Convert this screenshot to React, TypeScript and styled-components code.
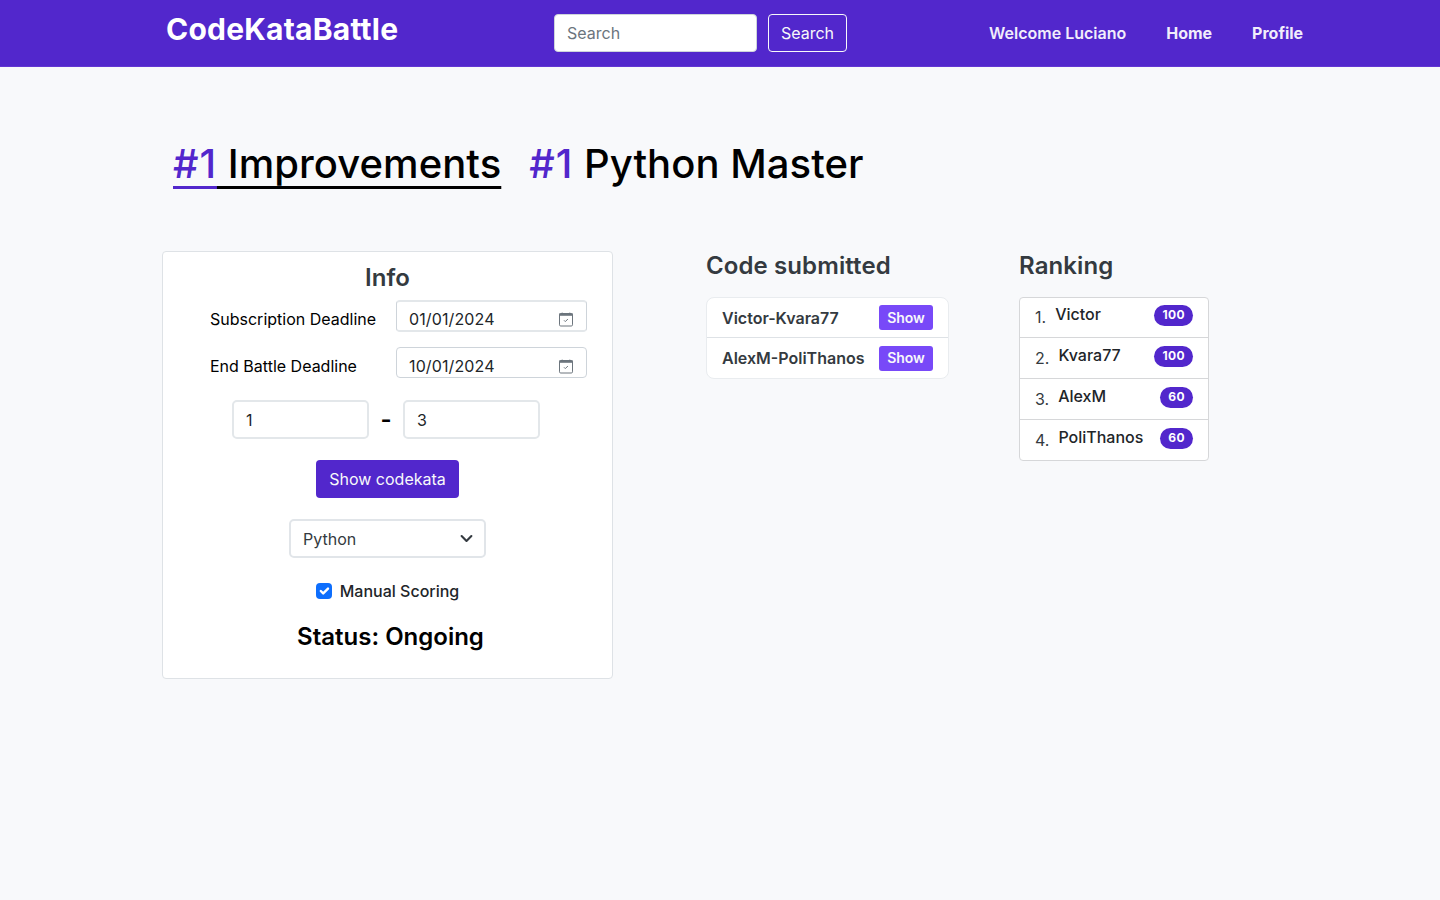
import React from "react";
import styled, { createGlobalStyle } from "styled-components";

const GlobalStyle = createGlobalStyle`
  *, *::before, *::after { box-sizing: border-box; }
  body {
    margin: 0;
    background: #f8f9fb;
    color: #212529;
    font-family: Inter, "Liberation Sans", sans-serif;
    font-size: 16px;
    line-height: 24px;
  }
  input, button { font: inherit; letter-spacing: inherit; }
  h1, h2, h3, p, ol, ul { margin: 0; padding: 0; list-style: none; }
`;

const Page = styled.div`
  min-height: 900px;
  white-space: nowrap;
`;

const Navbar = styled.header`
  display: flex;
  align-items: flex-start;
  height: 67px;
  padding: 14px 0 0 166px;
  background: #5227cc;
  border-bottom: 1px solid #6236d3;
`;

const Brand = styled.h1`
  width: 388px;
  font-size: 30px;
  line-height: 30px;
  font-weight: 700;
  letter-spacing: 0.22px;
  color: #fff;
`;

const SearchForm = styled.form`
  display: flex;
  gap: 11px;
  width: 435px;
`;

const SearchInput = styled.input`
  width: 203px;
  height: 38px;
  padding: 0 12px;
  border: 1px solid #ced4da;
  border-radius: 4px;
  background: #fff;
  &::placeholder { color: #6c757d; opacity: 1; }
`;

const SearchButton = styled.button`
  width: 79px;
  height: 38px;
  padding: 0;
  border: 1px solid #f8f9fa;
  border-radius: 4px;
  background: transparent;
  color: #f8f9fa;
`;

const Nav = styled.nav`
  display: flex;
  gap: 40px;
  padding-top: 7px;
`;

const NavItem = styled.a<{ $strong?: boolean }>`
  color: #f1edfb;
  font-weight: ${(p) => (p.$strong ? 700 : 600)};
`;

const Tabs = styled.div`
  display: flex;
  gap: 28px;
  padding: 73px 0 0 173px;
  height: 184px;
`;

const Tab = styled.h2<{ $active?: boolean }>`
  height: 49px;
  font-size: 40px;
  line-height: 48px;
  font-weight: 500;
  letter-spacing: 0.06px;
  color: #000;
  text-decoration: ${(p) => (p.$active ? "underline" : "none")};
  text-decoration-thickness: 2.6px;
  text-underline-offset: 8px;
  text-decoration-skip-ink: none;
`;

const TabRank = styled.span`
  color: #5227cc;
  letter-spacing: 0.9px;
  text-decoration: inherit;
`;

const Columns = styled.main`
  display: flex;
  align-items: flex-start;
  padding-left: 162px;
`;

const InfoCard = styled.section`
  display: flex;
  flex-direction: column;
  align-items: center;
  width: 451px;
  height: 428px;
  margin-right: 93px;
  padding-top: 11px;
  background: #fff;
  border: 1px solid #dee2e6;
  border-radius: 4px;
`;

const SectionTitle = styled.h3`
  font-size: 24px;
  line-height: 30px;
  font-weight: 600;
  letter-spacing: 0.1px;
  color: #343a40;
`;

const DateRow = styled.div`
  display: flex;
  width: 377px;
  height: 32px;
  margin: 7px 0 0 22px;
  & + & { margin-top: 15px; }
`;

const DateLabel = styled.label`
  width: 186px;
  padding-top: 7px;
  color: #000;
`;

const DateField = styled.div<{ $soft: boolean }>`
  display: flex;
  justify-content: space-between;
  width: 191px;
  height: ${(p) => (p.$soft ? 32 : 31)}px;
  padding: ${(p) => (p.$soft ? 5 : 6)}px 12px 0;
  border: 1px solid #ced4da;
  border-width: ${(p) => (p.$soft ? "2px 1px" : "1px")};
  border-top-color: ${(p) => (p.$soft ? "#e3e7ea" : "#ced4da")};
  border-bottom-color: ${(p) => (p.$soft ? "#e3e7ea" : "#ced4da")};
  border-radius: 4px;
  background: #fff;
  letter-spacing: 0.12px;
  svg { margin-top: 5px; }
`;

const GroupRange = styled.div`
  display: flex;
  align-items: center;
  margin: 21px 3px 0 0;
`;

const NumberField = styled.div`
  width: 137px;
  height: 39px;
  padding: 6px 12px;
  border: 2px solid #e3e7ea;
  border-radius: 5px;
  background: #fff;
`;

const Dash = styled.span`
  width: 34px;
  text-align: center;
  font-size: 24px;
  font-weight: 600;
  color: #000;
`;

const KataButton = styled.button`
  width: 143px;
  height: 38px;
  margin-top: 21px;
  padding: 0;
  border: 0;
  border-radius: 4px;
  background: #5227cc;
  color: #f8f9fa;
`;

const LanguageSelect = styled.div`
  display: flex;
  align-items: center;
  justify-content: space-between;
  width: 197px;
  height: 39px;
  margin-top: 21px;
  padding: 0 11px 0 12px;
  border: 2px solid #e1e5e9;
  border-radius: 5px;
  color: #343a40;
`;

const ScoringRow = styled.label`
  display: flex;
  align-items: center;
  gap: 8px;
  margin-top: 21px;
  font-weight: 500;
`;

const CheckMark = styled.span`
  display: flex;
  width: 16px;
  height: 16px;
  border-radius: 4px;
  background: #0d6efd;
`;

const Status = styled.p`
  margin: 20px 0 0 6px;
  font-size: 24px;
  line-height: 28px;
  font-weight: 600;
  color: #000;
`;

const ListSection = styled.section<{ $width: number }>`
  width: ${(p) => p.$width}px;
`;

const List = styled.ol<{ $radius: number; $border: string }>`
  margin-top: 16px;
  border: 1px solid ${(p) => p.$border};
  border-radius: ${(p) => p.$radius}px;
  background: #fff;
  overflow: hidden;
`;

const SubmissionRow = styled.li`
  display: flex;
  align-items: center;
  justify-content: space-between;
  height: 41px;
  padding: 0 15px;
  font-weight: 600;
  color: #343a40;
  & + & { border-top: 1px solid #dee2e6; }
  &:first-child { height: 39px; }
`;

const ShowButton = styled.button`
  width: 54px;
  height: 25px;
  padding: 0;
  border: 0;
  border-radius: 3px;
  background: #7849f8;
  color: #f8f9fa;
  font-size: 14px;
  font-weight: 600;
`;

const RankRow = styled.li`
  display: flex;
  height: 41px;
  padding: 8px 15px 0;
  & + & { border-top: 1px solid #d6d7d9; }
  &:first-child { height: 39px; padding-top: 7px; }
`;

const Position = styled.span`
  margin-right: 9px;
  color: #343a40;
`;

const Player = styled.span`
  flex: 1;
  margin-top: -3px;
  font-weight: 500;
`;

const Score = styled.span`
  height: 21px;
  padding: 0 8px;
  border-radius: 11px;
  background: #5227cc;
  color: #fff;
  font-size: 12px;
  line-height: 20px;
  font-weight: 700;
  letter-spacing: 0.4px;
`;

const CalendarIcon = () => (
  <svg width="16" height="16" viewBox="0 0 16 16" fill="none" stroke="#6c757d">
    <rect x="1.5" y="1.5" width="13" height="12.5" rx="1.2" />
    <path d="M1.2 2.6h13.6" strokeWidth="2.4" />
    <path d="M4.2.6v1M11.8.6v1" />
    <path d="m6 8.3 1.3 1.3 2.6-2.6" />
  </svg>
);

const ChevronIcon = () => (
  <svg width="13" height="13" viewBox="0 0 16 16" fill="none" stroke="#343a40" strokeWidth="2.6" strokeLinecap="round" strokeLinejoin="round">
    <path d="m2 5 6 6 6-6" />
  </svg>
);

const CheckIcon = () => (
  <svg width="16" height="16" viewBox="0 0 20 20" fill="none" stroke="#fff" strokeWidth="3" strokeLinecap="round" strokeLinejoin="round">
    <path d="m6 10 3 3 6-6" />
  </svg>
);

const deadlines = [
  { label: "Subscription Deadline", value: "01/01/2024" },
  { label: "End Battle Deadline", value: "10/01/2024" },
];
const submissions = ["Victor-Kvara77", "AlexM-PoliThanos"];
const ranking = [
  { name: "Victor", score: 100 },
  { name: "Kvara77", score: 100 },
  { name: "AlexM", score: 60 },
  { name: "PoliThanos", score: 60 },
];

export default function App() {
  return (
    <Page>
      <GlobalStyle />
      <Navbar>
        <Brand>CodeKataBattle</Brand>
        <SearchForm>
          <SearchInput placeholder="Search" />
          <SearchButton type="button">Search</SearchButton>
        </SearchForm>
        <Nav>
          <NavItem>Welcome Luciano</NavItem>
          <NavItem $strong>Home</NavItem>
          <NavItem $strong>Profile</NavItem>
        </Nav>
      </Navbar>
      <Tabs>
        <Tab $active><TabRank>#1</TabRank> Improvements</Tab>
        <Tab><TabRank>#1</TabRank> Python Master</Tab>
      </Tabs>
      <Columns>
        <InfoCard>
          <SectionTitle>Info</SectionTitle>
          {deadlines.map((d, i) => (
            <DateRow key={d.label}>
              <DateLabel>{d.label}</DateLabel>
              <DateField $soft={i === 0}>{d.value}<CalendarIcon /></DateField>
            </DateRow>
          ))}
          <GroupRange>
            <NumberField>1</NumberField>
            <Dash>-</Dash>
            <NumberField>3</NumberField>
          </GroupRange>
          <KataButton>Show codekata</KataButton>
          <LanguageSelect>Python<ChevronIcon /></LanguageSelect>
          <ScoringRow><CheckMark><CheckIcon /></CheckMark>Manual Scoring</ScoringRow>
          <Status>Status: Ongoing</Status>
        </InfoCard>
        <ListSection $width={313}>
          <SectionTitle>Code submitted</SectionTitle>
          <ListSection as="div" $width={243}>
            <List $radius={8} $border="#e9ecef">
              {submissions.map((s) => (
                <SubmissionRow key={s}>{s}<ShowButton>Show</ShowButton></SubmissionRow>
              ))}
            </List>
          </ListSection>
        </ListSection>
        <ListSection $width={190}>
          <SectionTitle>Ranking</SectionTitle>
          <List $radius={4} $border="#d6d7d9">
            {ranking.map((r, i) => (
              <RankRow key={r.name}>
                <Position>{i + 1}.</Position>
                <Player>{r.name}</Player>
                <Score>{r.score}</Score>
              </RankRow>
            ))}
          </List>
        </ListSection>
      </Columns>
    </Page>
  );
}
